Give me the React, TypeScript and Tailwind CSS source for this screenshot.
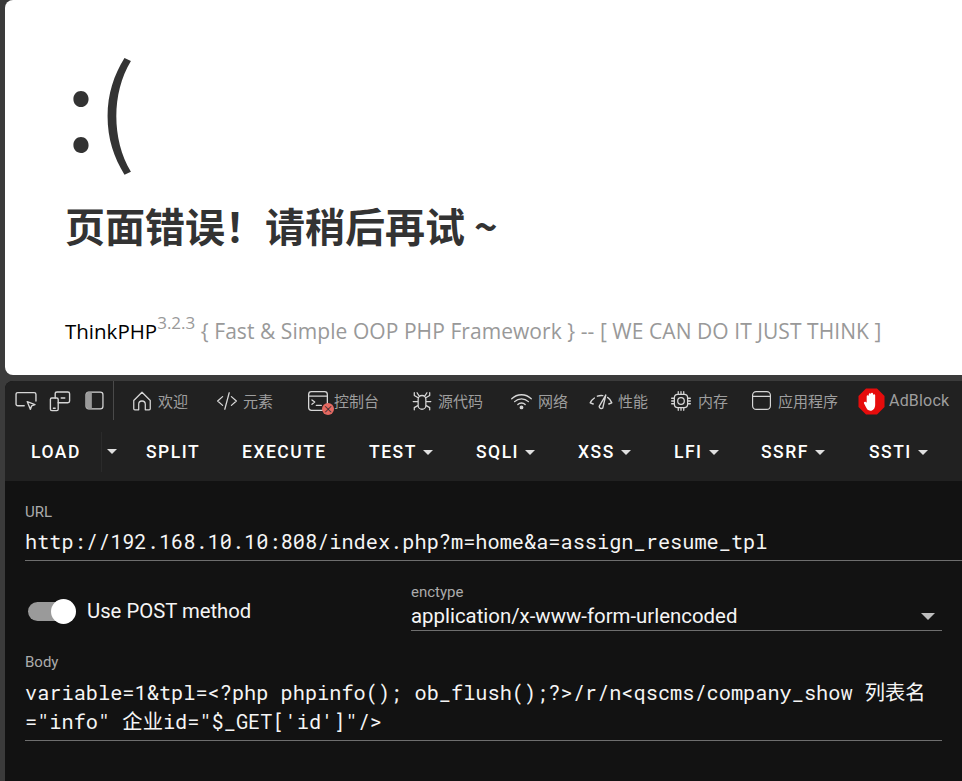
import React from "react";

const stroke = { fill: "none", stroke: "#d6d6d6", strokeWidth: 1.15, strokeLinecap: "round" as const, strokeLinejoin: "round" as const };

function Ico({ w = 20, h = 20, children }: { w?: number; h?: number; children: React.ReactNode }) {
  return (
    <svg width={w} height={h} viewBox="0 0 20 20" className="shrink-0" {...stroke}>
      {children}
    </svg>
  );
}

function Tab({ icon, label, className }: { icon: React.ReactNode; label: string; className: string }) {
  return (
    <div className={`flex items-center ${className}`}>
      {icon}
      <span className="text-[15px] leading-5 text-[#9e9e9e]">{label}</span>
    </div>
  );
}

function Caret() {
  return <span className="ml-[6px] inline-block w-0 h-0 border-x-[5px] border-x-transparent border-t-[5px] border-t-[#e0e0e0]" />;
}

function Btn({ label, caret, className }: { label: string; caret?: boolean; className: string }) {
  return (
    <div className={`flex items-center text-[17.5px] font-medium tracking-[1.5px] text-white ${className}`}>
      {label}
      {caret && <Caret />}
    </div>
  );
}

export default function App() {
  return (
    <div className="w-[962px] h-[781px] overflow-hidden bg-[#3b3b3b] flex flex-col font-['Roboto','Noto_Sans_CJK_SC',sans-serif]">
      <div className="ml-[5px] h-[375px] shrink-0 bg-white rounded-l-[8px] pl-[60px] text-[#333] font-['Open_Sans','Noto_Sans_CJK_SC',sans-serif]">
        <div className="h-[196px] pt-[32px] text-[115px] leading-[140px] font-['Noto_Sans_CJK_SC','Noto_Sans',sans-serif] font-normal">:(</div>
        <h1 className="h-[58px] text-[40px] leading-[58px] font-bold font-['Noto_Sans_CJK_SC',sans-serif] whitespace-nowrap">页面错误！请稍后再试 ~</h1>
        <div className="mt-[60px] text-[20.5px] leading-[34px] whitespace-nowrap text-[#999]">
          <span className="text-black">ThinkPHP</span>
          <sup className="text-[17px] align-[2px] leading-none">3.2.3</sup>
          <span className="tracking-[0.06px] text-[21px]"> {"{ Fast & Simple OOP PHP Framework } -- [ WE CAN DO IT JUST THINK ]"}</span>
        </div>
      </div>

      <div className="ml-[5px] mt-[6px] flex-1 bg-[#121212] rounded-tl-[8px] overflow-hidden flex flex-col">
        <div className="h-[39px] shrink-0 bg-[#212121] flex items-center pl-[9px] whitespace-nowrap font-['Noto_Sans_CJK_SC',sans-serif]">
          <div className="flex items-center w-[100px] h-[39px] border-r border-[#4a4a4a]">
            <Ico w={24} h={24}>
              <path d="M8.500 14H3.200A1.500 1.500 0 0 1 1.700 12.500v-8A1.500 1.500 0 0 1 3.200 3h13.600a1.500 1.500 0 0 1 1.500 1.500V10" />
              <path d="M11 10.500l6.500 2.500-2.800 1-1 3z" />
            </Ico>
            <span className="ml-[10px]">
              <Ico w={24} h={24}>
                <rect x="2" y="7.500" width="6.500" height="10.500" rx="1.200" />
                <path d="M6 7.500V4a1.500 1.500 0 0 1 1.500-1.500h9A1.500 1.500 0 0 1 18 4v6a1.500 1.500 0 0 1-1.500 1.500H8.500M11 7.500h3M4.500 16h1.500" />
              </Ico>
            </span>
            <span className="ml-[13px]">
              <svg width="19" height="19" viewBox="0 0 18 18" className="block">
                <rect x="1" y="1" width="16" height="16" rx="2.500" fill="none" stroke="#d6d6d6" strokeWidth="1.200" />
                <path d="M3 1h3.500v16H3a2 2 0 0 1-2-2V3a2 2 0 0 1 2-2z" fill="#9a9a9a" />
              </svg>
            </span>
          </div>
          <Tab className="ml-[17px] w-[85px] gap-[5px]" label="欢迎" icon={
            <Ico w={22} h={22}><path d="M2.500 9.500 10 2l7.500 7.500V17a1 1 0 0 1-1 1H13v-5a3 3 0 0 0-6 0v5H3.500a1 1 0 0 1-1-1z" /></Ico>
          } />
          <Tab className="w-[91px] gap-[5px]" label="元素" icon={
            <Ico w={22} h={22}><path d="M6 6l-4.500 4L6 14M14 6l4.500 4L14 14M12 2.500 8 17.500" /></Ico>
          } />
          <Tab className="w-[104px] gap-[5px]" label="控制台" icon={
            <div className="relative">
              <Ico w={22} h={22}>
                <rect x="1.500" y="1.500" width="17" height="17" rx="2.500" />
                <path d="M1.500 5.500h17M4.500 9l2.500 2-2.500 2M8.500 14H13" />
              </Ico>
              <span className="absolute left-[15px] top-[13px] w-[12px] h-[12px] rounded-full bg-[#e46962] text-[#222] text-[10px] leading-[11px] text-center">×</span>
            </div>
          } />
          <Tab className="w-[99px] gap-[5px]" label="源代码" icon={
            <Ico w={22} h={22}>
              <path d="M6.500 8.500a3.500 3.500 0 0 1 7 0V14a3.500 3.500 0 0 1-7 0zM7.500 5.500 5.500 2.500M12.500 5.500l2-3M6.500 10.500H2M13.500 10.500H18M6.500 7 3 5V2.500M13.500 7l3.500-2V2.500M6.500 14 3 16v2M13.500 14l3.500 2v2" />
            </Ico>
          } />
          <Tab className="w-[79px] gap-[5px]" label="网络" icon={
            <Ico w={23} h={23}>
              <path d="M1.500 8.500a12 12 0 0 1 17 0M4 11a8.500 8.500 0 0 1 12 0M6.800 13.500a4.500 4.500 0 0 1 6.400 0" />
              <circle cx="10" cy="16" r="1.100" fill="#d6d6d6" />
            </Ico>
          } />
          <Tab className="w-[81px] gap-[5px]" label="性能" icon={
            <Ico w={24} h={24}>
              <path d="M1 11.500A9.500 9.500 0 0 1 4.500 7.500M3.500 12.500 1 11.500M7 6a9 9 0 0 1 4.500-.5M15.500 7a9 9 0 0 1 3.500 4.500M19 11.500l-2.500 1M8.500 14.500 14 5l-2.500 10.800a1.800 1.800 0 0 1-3-1.300z" />
            </Ico>
          } />
          <Tab className="w-[81px] gap-[6px]" label="内存" icon={
            <Ico w={22} h={22}>
              <rect x="4" y="4" width="12" height="12" rx="3" />
              <circle cx="10" cy="10" r="3" />
              <path d="M7.500 1.500V4M10 1.500V4M12.500 1.500V4M7.500 16v2.500M10 16v2.500M12.500 16v2.500M1.500 7.500H4M1.500 10H4M1.500 12.500H4M16 7.500h2.500M16 10h2.500M16 12.500h2.500" />
            </Ico>
          } />
          <Tab className="w-[106px] gap-[6px]" label="应用程序" icon={
            <Ico w={21} h={21}>
              <rect x="1.500" y="1.500" width="17" height="17" rx="3.500" />
              <path d="M1.500 6h17" />
            </Ico>
          } />
          <div className="ml-[1px] mt-[1px] flex items-center gap-[4px] text-[16px] text-[#9e9e9e] font-['Roboto',sans-serif] tracking-[0.2px]">
            <svg width="27" height="27" viewBox="0 0 28 28" className="shrink-0">
              <path d="M8.300 0.500h11.400L27.500 8.300v11.400L19.700 27.500H8.300L0.500 19.700V8.300z" fill="#e60c0c" />
              <path d="M9 15V8.500a1.100 1.100 0 0 1 2.200 0V13V6.500a1.100 1.100 0 0 1 2.200 0V13V6a1.100 1.100 0 0 1 2.200 0v7V7.500a1.100 1.100 0 0 1 2.200 0V17c0 4-2 6.500-5 6.500-2.500 0-3.500-1.500-4.500-3.500l-2-4c-.8-1.500 1-2.500 2-1.300z" fill="#fff" />
            </svg>
            AdBlock
          </div>
        </div>

        <div className="h-[61px] shrink-0 bg-[#212121] flex items-center whitespace-nowrap pt-[3px]">
          <Btn className="ml-[26px] w-[70px]" label="LOAD" />
          <div className="h-[40px] w-px bg-[#2b2b2b]" />
          <div className="ml-[-1px] w-[45px] -mt-px flex"><Caret /></div>
          <Btn className="w-[96px]" label="SPLIT" />
          <Btn className="w-[127px]" label="EXECUTE" />
          <Btn className="w-[107px]" label="TEST" caret />
          <Btn className="w-[102px]" label="SQLI" caret />
          <Btn className="w-[96px]" label="XSS" caret />
          <Btn className="w-[87px]" label="LFI" caret />
          <Btn className="w-[108px]" label="SSRF" caret />
          <Btn className="w-[70px]" label="SSTI" caret />
        </div>

        <div className="flex-1 pl-[20px] pr-[20px]">
          <label className="block mt-[22px] text-[15px] leading-[18px] text-[#ababab]">URL</label>
          <div className="-mr-[20px] mt-[3px] h-[37px] border-b border-[#6e6e6e] text-[20.3px] leading-[35px] text-[#f5f5f5] font-['Roboto_Mono','DejaVu_Sans_Mono','Liberation_Mono',monospace]">
            http://192.168.10.10:808/index.php?m=home&amp;a=assign_resume_tpl
          </div>
          <div className="flex mt-[22px] h-[50px]">
            <div className="flex items-center w-[386px] pl-[3px] pt-[6px]">
              <div className="relative w-[47px] h-[19px] rounded-full bg-[#9a9a9a]">
                <span className="absolute right-[-1px] top-[-3px] w-[25px] h-[25px] rounded-full bg-white" />
              </div>
              <span className="ml-[12px] text-[20.3px] text-[#f5f5f5]">Use POST method</span>
            </div>
            <div className="flex-1">
              <div className="text-[15px] leading-[18px] text-[#ababab]">enctype</div>
              <div className="h-[30px] border-b border-[#6e6e6e] flex items-center justify-between text-[20.4px] text-[#f5f5f5] pr-[7px] pt-[1px]">
                application/x-www-form-urlencoded
                <span className="w-0 h-0 border-x-[7px] border-x-transparent border-t-[7px] border-t-[#bdbdbd]" />
              </div>
            </div>
          </div>
          <label className="block mt-[20px] text-[15px] leading-[18px] text-[#ababab]">Body</label>
          <div className="mt-[7px] pb-[4px] border-b border-[#6e6e6e] text-[20.3px] leading-[29px] text-[#f5f5f5] font-['Roboto_Mono','DejaVu_Sans_Mono','Noto_Sans_CJK_SC',monospace]">
            {"variable=1&tpl=<?php phpinfo(); ob_flush();?>/r/n<qscms/company_show 列表名=\"info\" 企业id=\"$_GET['id']\"/>"}
          </div>
        </div>
      </div>
    </div>
  );
}
